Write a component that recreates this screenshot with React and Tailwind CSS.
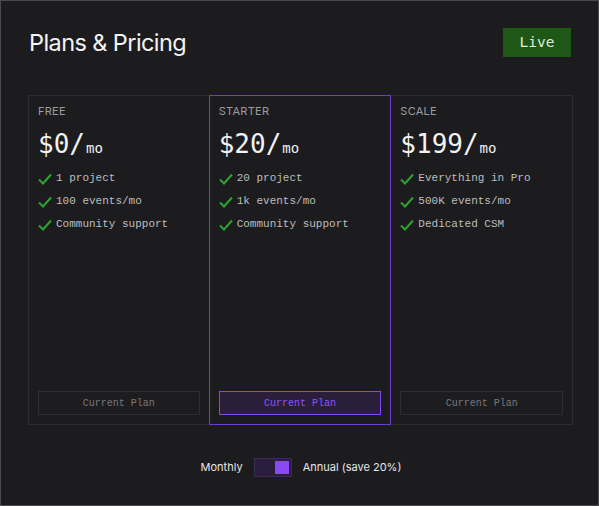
import React, { useState } from 'react';

const plans = [
  { id: 'free', name: 'FREE', price: '$0', features: ['1 project', '100 events/mo', 'Community support'] },
  { id: 'starter', name: 'STARTER', price: '$20', features: ['20 project', '1k events/mo', 'Community support'], current: true },
  { id: 'scale', name: 'SCALE', price: '$199', features: ['Everything in Pro', '500K events/mo', 'Dedicated CSM'] },
];

const mono = { fontFamily: '"Liberation Mono", "DejaVu Sans Mono", monospace' };
const priceMono = { fontFamily: '"DejaVu Sans Mono", "Liberation Mono", monospace' };

function Check() {
  return (
    <svg width="14" height="12" viewBox="0 0 14 12" className="shrink-0">
      <path d="M1 6.5 L5 10.5 L13 1.5" fill="none" stroke="#2ea42e" strokeWidth="2" />
    </svg>
  );
}

function PlanCard({ plan, index }) {
  return (
    <div
      className={`relative flex flex-col h-[330px] border px-[9px] pt-[8px] pb-[9px] ${
        plan.current ? 'border-[#6e3fd1] z-10' : 'border-[#2c2c2f]'
      } ${index > 0 ? '-ml-px' : ''}`}
    >
      <div className="text-[11px] leading-[14px] text-[#9c9c9f] tracking-wide">{plan.name}</div>
      <div className="flex items-baseline mt-[10px] text-[#f2f2f2]" style={priceMono}>
        <span className="text-[26px] leading-[32px]">{plan.price}/</span>
        <span className="text-[14px] ml-px">mo</span>
      </div>
      <div className="flex flex-col mt-[7px]">
        {plan.features.map(f => (
          <div key={f} className="flex items-center gap-[4px] h-[23px] text-[11px] text-[#bdbdbf]" style={mono}>
            <Check />
            <span>{f}</span>
          </div>
        ))}
      </div>
      <div className="flex-1" />
      <button
        className={`h-[24px] w-full border text-[10px] ${
          plan.current
            ? 'border-[#8a45f0] bg-[#2a1e3a] text-[#8f55f2]'
            : 'border-[#2e2e31] bg-[#1d1d1f] text-[#77777a]'
        }`}
        style={mono}
      >
        Current Plan
      </button>
    </div>
  );
}

export default function App() {
  const [annual, setAnnual] = useState(true);

  return (
    <div
      className="w-[599px] h-[506px] border border-[#4a4a4c] bg-[#1c1c1e] px-[27px] pt-[27px]"
      style={{ fontFamily: 'Inter, "Liberation Sans", sans-serif' }}
    >
      {/* Header */}
      <div className="flex items-center justify-between h-[29px]">
        <h1 className="ml-[1px] text-[23.5px] font-normal tracking-tight text-[#f4f4f4]">Plans &amp; Pricing</h1>
        <span
          className="flex items-center justify-center w-[68px] h-[29px] bg-[#1f5716] text-[#dcefd6] text-[14.5px]"
          style={priceMono}
        >
          Live
        </span>
      </div>

      {/* Plan cards */}
      <div className="grid grid-cols-3 w-[545px] mt-[38px]">
        {plans.map((p, i) => (
          <PlanCard key={p.id} plan={p} index={i} />
        ))}
      </div>

      {/* Billing toggle */}
      <div className="flex items-center justify-center gap-[11px] mt-[33px] pl-[3px]">
        <span className="text-[11px] text-[#e6e6e6]">Monthly</span>
        <button
          onClick={() => setAnnual(!annual)}
          className={`flex items-center w-[38px] h-[19px] border border-[#3a2b52] bg-[#2a1d3e] px-[2px] ${
            annual ? 'justify-end' : 'justify-start'
          }`}
        >
          <span className="w-[14px] h-[13px] bg-[#8a47f5]" />
        </button>
        <span className="text-[11px] text-[#e6e6e6]">Annual (save 20%)</span>
      </div>
    </div>
  );
}
